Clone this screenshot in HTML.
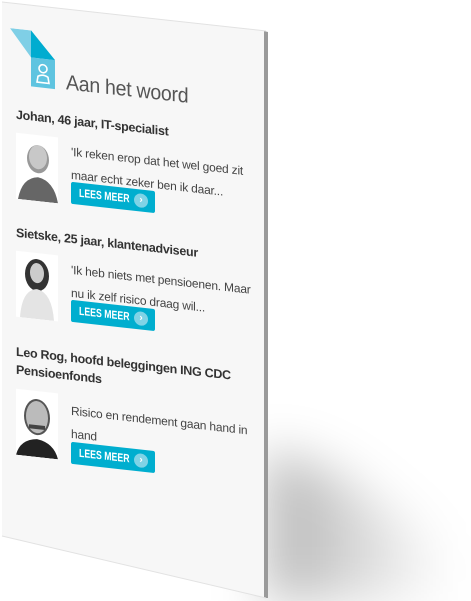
<!DOCTYPE html>
<html><head><meta charset="utf-8"><style>
html,body{margin:0;padding:0;width:471px;height:601px;background:#fff;overflow:hidden;position:relative;font-family:"Liberation Sans",sans-serif}
svg.bg{position:absolute;left:0;top:0}
#c{position:absolute;left:0;top:0;width:266px;height:600px;transform:skewY(6.3deg);transform-origin:0 0;color:#333}
.a{position:absolute;white-space:nowrap}
h1{position:absolute;left:66px;top:64px;margin:0;font-weight:normal;font-size:21px;color:#555;letter-spacing:-0.3px;transform:scaleX(.93);transform-origin:0 0}
.h{position:absolute;left:16px;font-weight:bold;font-size:12.5px;color:#333;letter-spacing:-0.3px;line-height:18px}
.p{position:absolute;left:16px;width:42px;height:66px;background:#fff;overflow:hidden}
.q{position:absolute;left:71px;font-size:12px;line-height:23px;color:#444;letter-spacing:-0.2px}
.b{position:absolute;left:71px;width:84px;height:22px;background:#00aecf;border-radius:2px;color:#fff;font-weight:bold;font-size:11.5px;line-height:22px;box-sizing:border-box;padding-left:8px}
.b span{display:inline-block;transform:scaleX(.76);transform-origin:0 50%}
.b i{position:absolute;right:7px;top:4px;width:14px;height:14px;border-radius:50%;background:#7fd3e6;font-style:normal;text-align:center;line-height:14px;font-size:10px}
</style></head><body>
<svg class="bg" width="471" height="601">
<defs><filter id="f" x="-50%" y="-50%" width="200%" height="200%"><feGaussianBlur stdDeviation="25"/></filter>
<linearGradient id="g" x1="0" x2="1"><stop offset="0" stop-color="#000" stop-opacity=".3"/><stop offset="1" stop-color="#000" stop-opacity="0"/></linearGradient></defs>
<polygon points="266,450 330,470 450,550 450,600 266,600" fill="url(#g)" filter="url(#f)"/>
<polygon points="2,2 266,31 266,598 2,536" fill="#f7f7f7"/>
<polygon points="264,31 268,32 268,598 264,598" fill="#9a9a9a"/>
<line x1="2" y1="2" x2="266" y2="31" stroke="#e2e2e2"/>
<line x1="2" y1="536" x2="266" y2="598" stroke="#e2e2e2"/>
</svg>
<div id="c">
<svg class="a" style="left:10px;top:27px" width="50" height="62">
<polygon points="0,0 21,0 45,27 21,27" fill="#7fcfe6"/>
<polygon points="21,0 45,27 21,27" fill="#00acd0"/>
<rect x="21" y="27" width="24" height="29" fill="#5fc4e0"/>
<circle cx="33" cy="37" r="4" fill="none" stroke="#fff" stroke-width="1.6"/>
<path d="M27 51 L28 45 Q33 42 38 45 L39 51 Z" fill="none" stroke="#fff" stroke-width="1.6"/>
</svg>
<h1>Aan het woord</h1>

<div class="h" style="top:104px">Johan, 46 jaar, IT-specialist</div>
<div class="p" style="top:131px"><svg width="42" height="66"><ellipse cx="22" cy="24" rx="11" ry="14" fill="#999"/><ellipse cx="22" cy="22" rx="9" ry="12" fill="#c8c8c8"/><path d="M2 66 Q6 44 22 42 Q38 44 42 66Z" fill="#666"/></svg></div>
<div class="q" style="top:133px">'Ik reken erop dat het wel goed zit<br>maar echt zeker ben ik daar...</div>
<div class="b" style="top:174px"><span>LEES MEER</span><i>›</i></div>

<div class="h" style="top:222px">Sietske, 25 jaar, klantenadviseur</div>
<div class="p" style="top:249px"><svg width="42" height="66"><ellipse cx="21" cy="22" rx="12" ry="16" fill="#333"/><ellipse cx="21" cy="20" rx="7" ry="10" fill="#ccc"/><path d="M4 66 Q6 38 21 36 Q36 38 38 66Z" fill="#e4e4e4"/></svg></div>
<div class="q" style="top:251px">'Ik heb niets met pensioenen. Maar<br>nu ik zelf risico draag wil...</div>
<div class="b" style="top:292px"><span>LEES MEER</span><i>›</i></div>

<div class="h" style="top:341px">Leo Rog, hoofd beleggingen ING CDC<br>Pensioenfonds</div>
<div class="p" style="top:387px"><svg width="42" height="66"><ellipse cx="21" cy="26" rx="13" ry="18" fill="#555"/><ellipse cx="21" cy="26" rx="11" ry="16" fill="#bbb"/><rect x="13" y="34" width="16" height="4" fill="#444"/><path d="M0 66 Q4 50 21 48 Q38 50 42 66Z" fill="#222"/></svg></div>
<div class="q" style="top:392px">Risico en rendement gaan hand in<br>hand</div>
<div class="b" style="top:434px"><span>LEES MEER</span><i>›</i></div>
</div>
</body></html>
